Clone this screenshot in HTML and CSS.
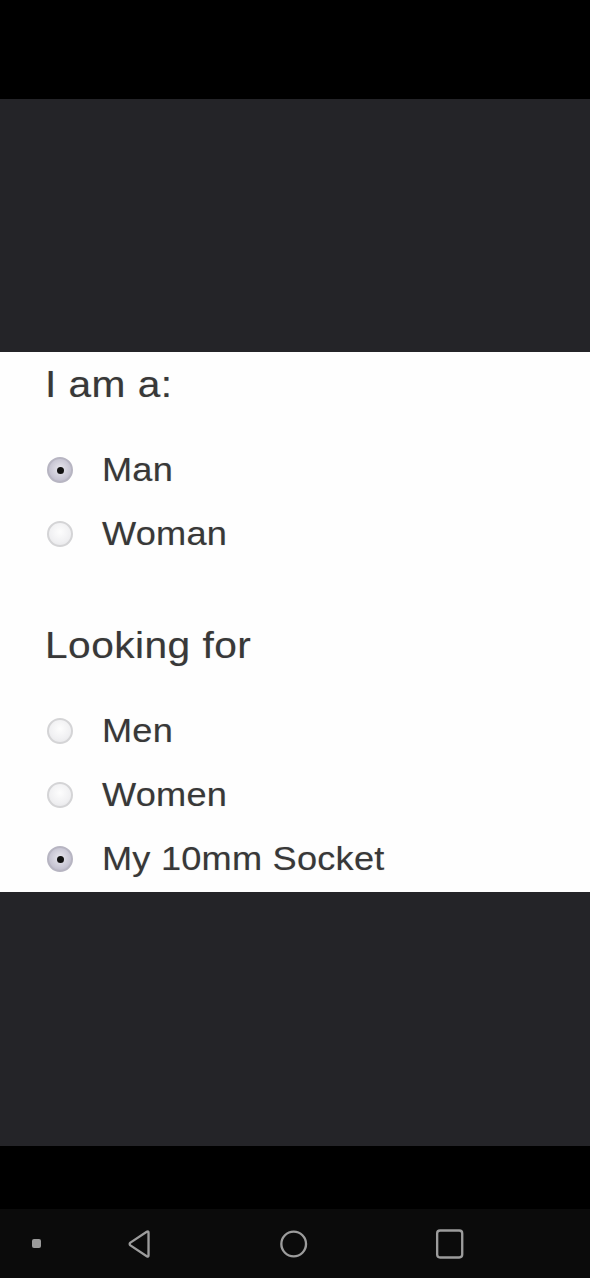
FILE: index.html
```html
<!DOCTYPE html>
<html lang="en">
<head>
    <meta charset="UTF-8">
    <meta name="viewport" content="width=device-width, initial-scale=1.0">
    <title>I am a</title>
    <link rel="stylesheet" href="styles.css">
</head>
<body>
    <div class="status-bar"></div>
    <div class="backdrop top"></div>

    <div class="form-card">
        <h2 class="question"><span>I am a:</span></h2>
        <label class="option"><input type="radio" name="iam" checked><span>Man</span></label>
        <label class="option"><input type="radio" name="iam"><span>Woman</span></label>

        <h2 class="question second"><span>Looking for</span></h2>
        <label class="option"><input type="radio" name="seek"><span>Men</span></label>
        <label class="option"><input type="radio" name="seek"><span>Women</span></label>
        <label class="option"><input type="radio" name="seek" checked><span>My 10mm Socket</span></label>
    </div>

    <div class="backdrop bottom"></div>
    <div class="black-strip"></div>

    <nav class="nav-bar">
        <span class="nav-dot"></span>
        <svg class="nav-icon" width="28" height="30" viewBox="0 0 28 30">
            <path d="M23 3.5 L23 26.5 Q23 28.5 21.2 27.4 L4.5 16.4 Q3 15 4.5 13.6 L21.2 2.6 Q23 1.5 23 3.5 Z" fill="none" stroke="#9c9c9c" stroke-width="2.4" stroke-linejoin="round"/>
        </svg>
        <svg class="nav-icon" width="30" height="30" viewBox="0 0 30 30">
            <circle cx="15" cy="15" r="12.6" fill="none" stroke="#9c9c9c" stroke-width="2.4"/>
        </svg>
        <svg class="nav-icon" width="30" height="30" viewBox="0 0 30 30">
            <rect x="2.2" y="1.2" width="25.6" height="27.6" rx="3" fill="none" stroke="#9c9c9c" stroke-width="2.4"/>
        </svg>
    </nav>
</body>
</html>
```

FILE: styles.css
```css
body {
    margin: 0;
    padding: 0;
    background: #000;
    font-family: "Liberation Sans", Arial, sans-serif;
    width: 590px;
    height: 1278px;
    overflow: hidden;
}

.status-bar {
    height: 99px;
    background: #000;
}

.backdrop {
    background: #242428;
}
.backdrop.top {
    height: 253px;
}
.backdrop.bottom {
    height: 254px;
}

.black-strip {
    height: 63px;
    background: #000;
}

.form-card {
    height: 540px;
    background: #fefefe;
    box-sizing: border-box;
    padding: 11px 0 0 45px;
    display: flex;
    flex-direction: column;
    color: #383838;
}

.question {
    margin: 0 0 31px 0;
    font-size: 36px;
    font-weight: normal;
    line-height: 44px;
    letter-spacing: 0.4px;
}
.question span {
    display: inline-block;
    transform: scaleX(1.13);
    transform-origin: left center;
    text-shadow: 0 0 1px rgba(0, 0, 0, 0.25);
}
.question.second {
    margin-top: 58px;
}

.option {
    display: flex;
    align-items: center;
    height: 64px;
    font-size: 33.5px;
    letter-spacing: 0.2px;
}
.option span {
    margin-left: 29px;
    display: inline-block;
    transform: scaleX(1.08);
    transform-origin: left center;
    text-shadow: 0 0 1px rgba(0, 0, 0, 0.25);
}

.option input {
    appearance: none;
    -webkit-appearance: none;
    margin: 0 0 0 2px;
    width: 26px;
    height: 26px;
    border-radius: 50%;
    box-sizing: border-box;
    border: 2px solid #d4d4d6;
    background: radial-gradient(circle at 50% 40%, #fdfdfd 0%, #f0f0f2 60%, #e2e2e4 100%);
    display: flex;
    align-items: center;
    justify-content: center;
}
.option input:checked {
    border-color: #b7b5c2;
    background: radial-gradient(circle at 50% 45%, #e8e7ee 0%, #c6c4d2 65%, #a9a7b8 100%);
}
.option input:checked::after {
    content: "";
    width: 7px;
    height: 7px;
    border-radius: 50%;
    background: #111;
}

.nav-bar {
    height: 69px;
    background: #0b0b0b;
    display: flex;
    align-items: center;
    padding-left: 32px;
}
.nav-dot {
    width: 9px;
    height: 9px;
    border-radius: 2px;
    background: #9a9a9a;
    margin-right: 85px;
}
.nav-icon {
    margin-right: 126px;
}
```
